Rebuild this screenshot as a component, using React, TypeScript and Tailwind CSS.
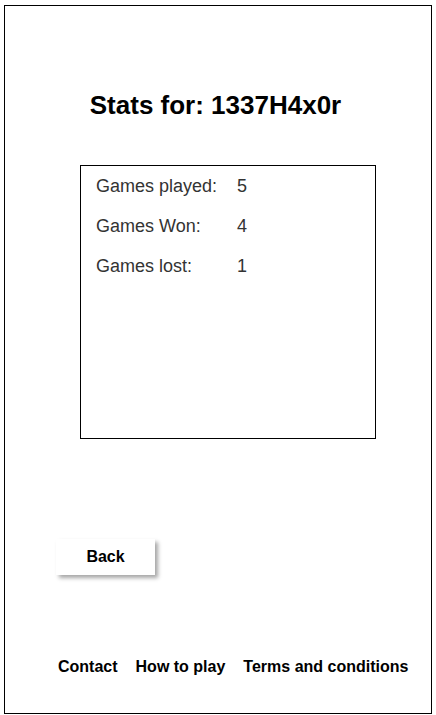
import React from "react";

const stats = [
  { label: "Games played:", value: "5" },
  { label: "Games Won:", value: "4" },
  { label: "Games lost:", value: "1" },
];

const App: React.FC = () => {
  return (
    <div className="w-[436px] h-[715px] bg-white pt-[5px] pl-[4px] font-['Liberation_Sans',Arial,sans-serif]">
      <div className="w-[428px] h-[709px] border border-black flex flex-col">
        <h1 className="mt-[84px] text-center text-[26px] leading-[30px] font-bold text-black pr-[5px]">
          Stats for: 1337H4x0r
        </h1>

        <div className="mt-[45px] ml-[75px] w-[296px] h-[274px] border border-black pt-[10px] pl-[15px] flex flex-col gap-[20px]">
          {stats.map((s) => (
            <div key={s.label} className="flex text-[18px] leading-[20px] text-[#333]">
              <span className="w-[141px]">{s.label}</span>
              <span>{s.value}</span>
            </div>
          ))}
        </div>

        <button className="mt-[100px] ml-[51px] w-[99px] h-[36px] bg-white text-[16px] font-bold text-black shadow-[3px_3px_4px_rgba(0,0,0,0.35)]">
          Back
        </button>

        <nav className="mt-[82px] ml-[53px] flex gap-[18px] text-[16px] leading-[20px] font-bold text-black">
          <a href="#">Contact</a>
          <a href="#">How to play</a>
          <a href="#">Terms and conditions</a>
        </nav>
      </div>
    </div>
  );
};

export default App;
